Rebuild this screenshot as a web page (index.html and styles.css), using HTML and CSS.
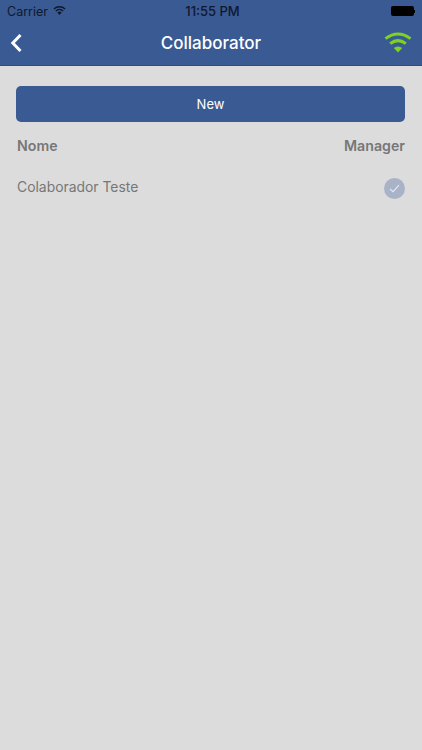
FILE: index.html
```html
<!DOCTYPE html>
<html lang="en">
<head>
    <meta charset="UTF-8">
    <meta name="viewport" content="width=device-width, initial-scale=1.0">
    <title>Collaborator</title>
    <link rel="stylesheet" href="styles.css">
</head>
<body>

<div class="app">
    <div class="header">
        <div class="status-bar">
            <div class="status-left">
                <span>Carrier</span>
                <svg class="status-wifi" width="13" height="9" viewBox="0 0 14 10">
                    <path d="M7 10 L4.6 7.3 A3.6 3.6 0 0 1 9.4 7.3 Z" fill="#10182c"/>
                    <path d="M2.9 5.5 A6 6 0 0 1 11.1 5.5" fill="none" stroke="#10182c" stroke-width="1.5"/>
                    <path d="M0.8 3.3 A9 9 0 0 1 13.2 3.3" fill="none" stroke="#10182c" stroke-width="1.5"/>
                </svg>
            </div>
            <div class="status-time">11:55 PM</div>
            <div class="status-right">
                <div class="battery"></div>
                <div class="battery-tip"></div>
            </div>
        </div>
        <div class="nav-bar">
            <svg class="back-icon" width="13" height="20" viewBox="0 0 13 20">
                <path d="M10.5 2 L2.8 10 L10.5 18" fill="none" stroke="#ffffff" stroke-width="3"/>
            </svg>
            <h1 class="nav-title">Collaborator</h1>
            <svg class="signal-icon" width="28" height="21" viewBox="0 0 28 21">
                <path d="M14 20.5 L9.8 16 Q14 13 18.2 16 Z" fill="#7ed321"/>
                <path d="M6.2 11.6 Q14 5.6 21.8 11.6" fill="none" stroke="#7ed321" stroke-width="3"/>
                <path d="M1.5 6.6 Q14 -2.6 26.5 6.6" fill="none" stroke="#7ed321" stroke-width="3"/>
            </svg>
        </div>
    </div>

    <div class="content">
        <button class="btn-new">New</button>
        <div class="row row-head">
            <span>Nome</span>
            <span>Manager</span>
        </div>
        <div class="row row-item">
            <span class="item-name">Colaborador Teste</span>
            <div class="check">
                <svg width="11" height="9" viewBox="0 0 11 9">
                    <path d="M1 4.8 L4 7.6 L10 1.2" fill="none" stroke="#e6e9f0" stroke-width="1.1"/>
                </svg>
            </div>
        </div>
    </div>
</div>

</body>
</html>
```

FILE: styles.css
```css
body {
    margin: 0;
    font-family: 'Inter', 'Liberation Sans', sans-serif;
    background-color: #dcdcdc;
}

.app {
    width: 422px;
    height: 750px;
    overflow: hidden;
}

.header {
    height: 65px;
    background-color: #3a5a94;
    border-bottom: 1px solid #2f4b80;
}

.status-bar {
    height: 22px;
    padding: 0 7px;
    display: grid;
    grid-template-columns: 1fr auto 1fr;
    align-items: center;
    font-size: 12.5px;
    color: #10182c;
}

.status-left {
    display: flex;
    align-items: center;
    gap: 5px;
}

.status-wifi {
    margin-bottom: 2px;
}

.status-time {
    margin-left: 3px;
    font-size: 13px;
    font-weight: 500;
}

.status-right {
    display: flex;
    justify-content: flex-end;
    align-items: center;
}

.battery {
    width: 23px;
    height: 10px;
    background-color: #000000;
    border-radius: 2px;
}

.battery-tip {
    width: 1px;
    height: 3px;
    background-color: #000000;
}

.nav-bar {
    height: 41px;
    padding: 0 10px;
    display: grid;
    grid-template-columns: 1fr auto 1fr;
    align-items: center;
}

.signal-icon {
    justify-self: end;
}

.nav-title {
    margin: 0;
    font-size: 17px;
    font-weight: 500;
    color: #ffffff;
}

.content {
    padding: 20px 17px 0 16px;
}

.btn-new {
    display: block;
    width: 100%;
    height: 36px;
    background-color: #3a5a94;
    border: none;
    border-radius: 5px;
    color: #ffffff;
    font-family: inherit;
    font-size: 13px;
}

.row {
    display: flex;
    align-items: center;
    justify-content: space-between;
    padding-left: 1px;
    font-size: 14px;
    color: #777777;
}

.row-head {
    height: 46px;
    font-size: 14.2px;
    font-weight: 600;
}

.row-item {
    height: 38px;
    margin-top: 1px;
}

.item-name {
    margin-bottom: 3px;
    font-size: 13.9px;
}

.check {
    width: 21px;
    height: 21px;
    border-radius: 50%;
    background-color: #a9b3c8;
    display: flex;
    align-items: center;
    justify-content: center;
}
```
